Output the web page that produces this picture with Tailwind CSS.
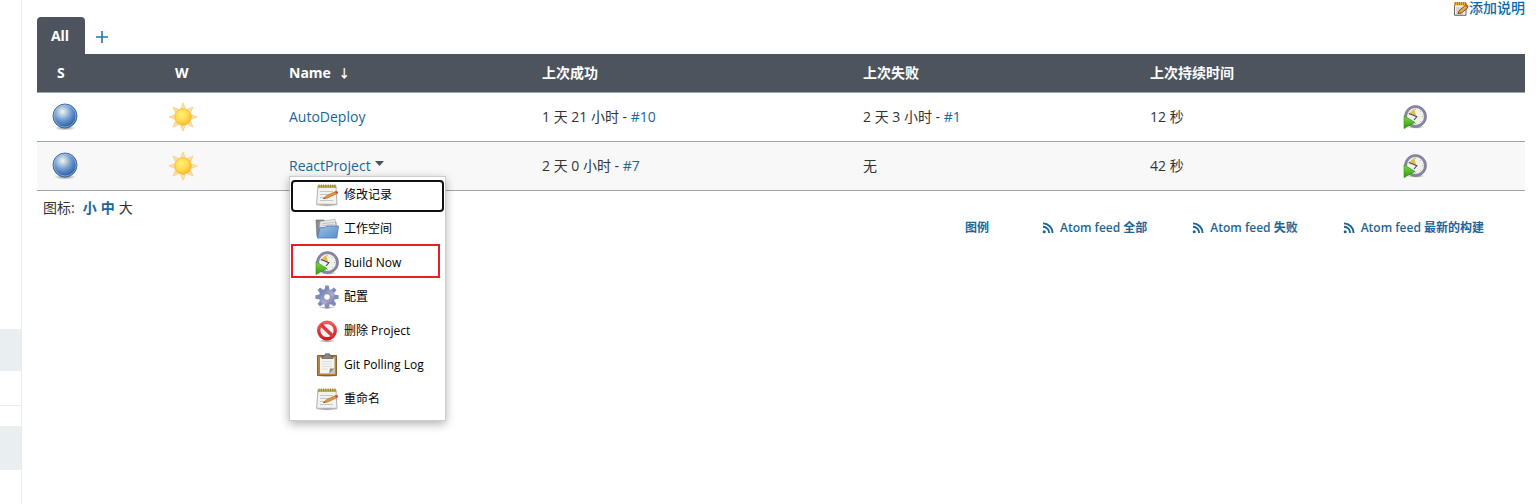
<!DOCTYPE html>
<html lang="zh-CN">
<head>
<meta charset="utf-8">
<title>Jenkins</title>
<script src="https://cdn.jsdelivr.net/npm/@tailwindcss/browser@4"></script>
</head>
<body class="flex min-h-screen bg-white font-['Open_Sans','Noto_Sans_CJK_SC',sans-serif] text-sm leading-5 text-[#333]">
<svg class="absolute size-0" aria-hidden="true">
  <defs>
    <radialGradient id="gBall" cx=".4" cy=".32" r=".65"><stop offset="0" stop-color="#f4f6e4"/><stop offset=".2" stop-color="#c3d6e3"/><stop offset=".55" stop-color="#6f9bd0"/><stop offset="1" stop-color="#2c5fa6"/></radialGradient>
    <radialGradient id="gSun" cx=".4" cy=".35" r=".7"><stop offset="0" stop-color="#fff07a"/><stop offset=".55" stop-color="#ffdc4a"/><stop offset="1" stop-color="#f9b233"/></radialGradient>
    <radialGradient id="gShade"><stop offset="0" stop-color="#000" stop-opacity=".45"/><stop offset="1" stop-color="#000" stop-opacity="0"/></radialGradient>
    <linearGradient id="gGreen" x1="0" y1="0" x2="0" y2="1"><stop offset="0" stop-color="#86d84a"/><stop offset="1" stop-color="#2f9a10"/></linearGradient>
    <linearGradient id="gGear" x1="0" y1="0" x2="1" y2="1"><stop offset="0" stop-color="#7086b8"/><stop offset=".6" stop-color="#a9acd0"/><stop offset="1" stop-color="#7d80a8"/></linearGradient>
    <linearGradient id="gFolder" x1="0" y1="0" x2="1" y2="1"><stop offset="0" stop-color="#9dc0e6"/><stop offset="1" stop-color="#5b8cc6"/></linearGradient>
    <linearGradient id="gRed" x1="0" y1="0" x2="0" y2="1"><stop offset="0" stop-color="#ee5a5a"/><stop offset="1" stop-color="#cc1e24"/></linearGradient>
    <symbol id="ball" viewBox="0 0 28 28"><ellipse cx="14" cy="25" rx="11" ry="2.6" fill="url(#gShade)"/><circle cx="14" cy="13" r="12" fill="url(#gBall)" stroke="#3f699f" stroke-width="1"/><circle cx="14" cy="13" r="11" fill="none" stroke="#a9c4e4" stroke-opacity=".7" stroke-width=".9"/></symbol>
    <symbol id="sun" viewBox="0 0 30 30">
      <g fill="#fce0a0" stroke="#f9cf83" stroke-width=".8">
        <path id="ray" d="M15 .9 17.300 6.600H12.700Z"/><use href="#ray" transform="rotate(45 15 15)"/><use href="#ray" transform="rotate(90 15 15)"/><use href="#ray" transform="rotate(135 15 15)"/><use href="#ray" transform="rotate(180 15 15)"/><use href="#ray" transform="rotate(225 15 15)"/><use href="#ray" transform="rotate(270 15 15)"/><use href="#ray" transform="rotate(315 15 15)"/>
      </g>
      <circle cx="15" cy="15" r="8.2" fill="url(#gSun)" stroke="#f6b53f" stroke-width=".8"/></symbol>
    <symbol id="clock" viewBox="0 0 24 24"><ellipse cx="13" cy="22" rx="9" ry="1.8" fill="url(#gShade)"/><circle cx="12.5" cy="11.5" r="9.8" fill="#f1f1ec" stroke="#8787a3" stroke-width="2.6"/><circle cx="12.5" cy="11.5" r="11" fill="none" stroke="#6c6c84" stroke-width=".5"/><path d="M6.500 8 11.200 3.800 13 10.500Z" fill="#e2bd4d"/><path d="M5.800 8.500 10.500 10.200 13.800 11.800 11 15" fill="none" stroke="#444" stroke-width="1.1"/><path d="M12.500 3.800v1M20 11.500h-1M12.500 19v-1M18 6l-.7.7M18 17l-.7-.7" stroke="#999" stroke-width=".8"/><path d="M1 10.800 12 17.400 1 23.600Z" fill="url(#gGreen)" stroke="#2f8d16" stroke-width=".6"/></symbol>
    <symbol id="note" viewBox="0 0 24 24"><ellipse cx="12" cy="22" rx="12" ry="1.7" fill="url(#gShade)"/><path d="M3 3h18l1 18.300H1.600Z" fill="#f2f2ef" stroke="#a9a9a3" stroke-width=".9"/><path d="M2.800 2.300h18.400v2.700H2.800Z" fill="#c9b94b"/><path d="M4 1.500v3M6.300 1.500v3M8.600 1.500v3M10.900 1.500v3M13.200 1.500v3M15.500 1.500v3M17.800 1.500v3M20 1.500v3" stroke="#8b7f2b" stroke-width="1"/><path d="M5 8.500h13M5 11.500h9M5 14.500h5M5 17.500h13" stroke="#c6c6c6" stroke-width="1"/><path d="M9 15.200 11.200 12.900 20.500 8.600 21.700 10.700 12 15.300Z" fill="#ea9a35" stroke="#9c5c1c" stroke-width=".6"/><path d="m20 8.800 1.500-.8q2 .3 1.600 2.100l-1.300.8Z" fill="#d4433d"/><path d="m8 15.900 1.300-1.400 1 1.100Z" fill="#333"/></symbol>
    <symbol id="folder" viewBox="0 0 24 24"><path d="M1 3h8l1.500 2H21v15H2Z" fill="#8a8d90" stroke="#6d7073" stroke-width=".7"/><path d="M5 4.500 20 2.300l1.500 10H4.500Z" fill="#e5e7e8" stroke="#a5a7a8" stroke-width=".6"/><path d="M7 6.800 19 5.300M7 8.800 19 7.300" stroke="#bbb" stroke-width=".8"/><path d="M5 10.800 10 10.500 11.500 9H23.500L21.800 21H2.500Z" fill="url(#gFolder)" stroke="#4b7ab5" stroke-width=".8"/></symbol>
    <symbol id="gear" viewBox="0 0 24 24"><ellipse cx="12" cy="22.500" rx="9" ry="1.400" fill="url(#gShade)"/><g fill="#7c8cb8"><path id="tooth" d="M10.300.4h3.400l1 6h-5.400Z"/><use href="#tooth" transform="rotate(45 12 12)"/><use href="#tooth" transform="rotate(90 12 12)"/><use href="#tooth" transform="rotate(135 12 12)"/><use href="#tooth" transform="rotate(180 12 12)"/><use href="#tooth" transform="rotate(225 12 12)"/><use href="#tooth" transform="rotate(270 12 12)"/><use href="#tooth" transform="rotate(315 12 12)"/></g><circle cx="12" cy="12" r="5.600" fill="none" stroke="url(#gGear)" stroke-width="4.800"/><circle cx="12" cy="12" r="3.400" fill="#fff" stroke="#686d99" stroke-width=".8"/></symbol>
    <symbol id="stop" viewBox="0 0 24 24"><ellipse cx="12" cy="22" rx="9" ry="1.700" fill="url(#gShade)"/><circle cx="12" cy="11.500" r="8.300" fill="#f7f3f3" stroke="url(#gRed)" stroke-width="3.400"/><path d="m6 5.800 12 11.500" stroke="#dc383b" stroke-width="3.400"/></symbol>
    <symbol id="clip" viewBox="0 0 24 24"><ellipse cx="12" cy="23" rx="11" ry="1" fill="url(#gShade)"/><path d="M2.500 2.500h19v20h-19Z" fill="#b8813d" stroke="#85571f" stroke-width=".9"/><path d="M5 4.500h14.500v16H5Z" fill="#f4f4f2"/><path d="M7 8.500h10M7 11h10M7 13.500h10M7 16h6" stroke="#dedede"/><path d="m19.500 15.500-5.500 5 5.500 0Z" fill="#c3c3c3"/><path d="m14 20.500 1-5 4.500 0Z" fill="#888"/><path d="M7 5.500V3h2.500L10.500.8h4L15.500 3H18v2.500Z" fill="#858883" stroke="#555753" stroke-width=".7"/></symbol>
    <symbol id="rss" viewBox="0 0 12 12"><circle cx="2.200" cy="9.800" r="1.500" fill="currentColor"/><path d="M1 4.800a6.200 6.200 0 0 1 6.200 6.200M1 1.400a9.600 9.600 0 0 1 9.600 9.600" fill="none" stroke="currentColor" stroke-width="1.900"/></symbol>
    <symbol id="edit" viewBox="0 0 16 16"><path d="M1.500 3H13v12.300H1.500Z" fill="#f4f3eb" stroke="#66665f" stroke-width="1"/><path d="M1 2.500H13.500v3H1Z" fill="#e5ad35"/><path d="M2.500 2v3M4.500 2v3M6.500 2v3M8.500 2v3M10.500 2v3M12.500 2v3" stroke="#9f741a" stroke-width=".8"/><path d="M3 8h6M3 10h4M3 12h3M3 14h7" stroke="#aaa" stroke-width=".8"/><path d="M5 13.500 6.300 10.500 12.500 5.200 15 7.500 8.500 13Z" fill="#f1a73c" stroke="#684018" stroke-width=".9"/><path d="m12.500 5.200 1.200-.8L15.700 6.500l-.8 1Z" fill="#d23f35"/></symbol>
  </defs>
</svg>

<aside class="flex w-[22px] shrink-0 flex-col border-r border-[#eaebec] pt-[329px]">
  <div class="h-[42px] bg-[#e9eef1]"></div>
  <div class="mt-[34px] h-px bg-[#eaebec]"></div>
  <div class="mt-5 h-11 bg-[#e9eef1]"></div>
</aside>

<main class="min-w-0 flex-1 pr-[15px] pl-[15px]">
  <div class="flex h-[17px] items-start justify-end">
    <a href="#" class="flex items-center leading-4 font-medium text-[#0b6aa2]"><svg class="size-4"><use href="#edit"/></svg>添加说明</a>
  </div>
  <nav class="flex h-[37px] items-stretch">
    <a href="#" class="flex w-12 items-center justify-center rounded-t bg-[#4d545d] pr-0.5 font-bold text-white">All</a>
    <a href="#" aria-label="New view" class="flex items-center px-[11px] pt-0.5 text-[#1f78ac]"><svg class="size-3" viewBox="0 0 12 12" fill="none" stroke="currentColor" stroke-width="1.600"><path d="M6 0v12M0 6h12"/></svg></a>
  </nav>

  <table class="w-full table-fixed border-collapse text-left">
    <colgroup><col class="w-[115px]"><col class="w-[121px]"><col class="w-[253px]"><col class="w-[321px]"><col class="w-[287px]"><col class="w-[253px]"><col class="w-[138px]"></colgroup>
    <thead>
      <tr class="h-[38px] border-b border-[#98a6ad] bg-[#4d545d] text-white">
        <th class="pl-5">S</th><th class="pl-[23px]">W</th><th class="pl-4">Name &nbsp;<span class="text-xs">↓</span></th><th class="pl-4">上次成功</th><th class="pl-4">上次失败</th><th class="pl-4">上次持续时间</th><th></th>
      </tr>
    </thead>
    <tbody>
      <tr class="h-[49px] border-b border-[#98a6ad]">
        <td class="pl-3.5"><svg class="size-7" role="img" aria-label="Success"><use href="#ball"/></svg></td>
        <td class="pl-4"><svg class="size-[30px]" role="img" aria-label="Sunny"><use href="#sun"/></svg></td>
        <td class="pl-4"><a href="#" class="font-medium text-[#1b6698]">AutoDeploy</a></td>
        <td class="pl-4">1 天 21 小时 - <a href="#" class="font-medium text-[#1b6698]">#10</a></td>
        <td class="pl-4">2 天 3 小时 - <a href="#" class="font-medium text-[#1b6698]">#1</a></td>
        <td class="pl-4">12 秒</td>
        <td class="pl-4"><button type="button" aria-label="Build" class="block"><svg class="size-6"><use href="#clock"/></svg></button></td>
      </tr>
      <tr class="h-[49px] border-b border-[#98a6ad] bg-[#f8f8f8]">
        <td class="pl-3.5"><svg class="size-7" role="img" aria-label="Success"><use href="#ball"/></svg></td>
        <td class="pl-4"><svg class="size-[30px]" role="img" aria-label="Sunny"><use href="#sun"/></svg></td>
        <td class="pl-4">
          <div class="relative">
            <a href="#" class="flex items-center gap-1 font-medium text-[#1b6698]">ReactProject<svg class="mb-1 h-[5px] w-[9px]" viewBox="0 0 9 5"><path d="M0 0h9L4.500 5Z" fill="#4d545d"/></svg></a>
            <div class="absolute top-5 left-0 z-10 w-[157px] border border-[#ccc] bg-white pt-px pb-1 text-xs text-black shadow-[0_3px_9px_rgba(0,0,0,0.3)]">
              <button type="button" class="relative flex h-[34px] w-full items-center gap-[5px] pl-[25px]"><span class="absolute inset-x-px top-0.5 bottom-0 rounded border-2 border-[#101010]"></span><svg class="size-6"><use href="#note"/></svg>修改记录</button>
              <button type="button" class="flex h-[34px] w-full items-center gap-[5px] pl-[25px]"><svg class="size-6"><use href="#folder"/></svg>工作空间</button>
              <button type="button" class="relative flex h-[34px] w-full items-center gap-[5px] pl-[25px]"><span class="absolute -top-0.5 right-[5px] bottom-0.5 left-px border-2 border-[#ec1c24]"></span><svg class="size-6"><use href="#clock"/></svg>Build Now</button>
              <button type="button" class="flex h-[34px] w-full items-center gap-[5px] pl-[25px]"><svg class="size-6"><use href="#gear"/></svg>配置</button>
              <button type="button" class="flex h-[34px] w-full items-center gap-[5px] pl-[25px]"><svg class="size-6"><use href="#stop"/></svg>删除 Project</button>
              <button type="button" class="flex h-[34px] w-full items-center gap-[5px] pl-[25px]"><svg class="size-6"><use href="#clip"/></svg>Git Polling Log</button>
              <button type="button" class="flex h-[34px] w-full items-center gap-[5px] pl-[25px]"><svg class="size-6"><use href="#note"/></svg>重命名</button>
            </div>
          </div>
        </td>
        <td class="pl-4">2 天 0 小时 - <a href="#" class="font-medium text-[#1b6698]">#7</a></td>
        <td class="pl-4">无</td>
        <td class="pl-4">42 秒</td>
        <td class="pl-4"><button type="button" aria-label="Build" class="block"><svg class="size-6"><use href="#clock"/></svg></button></td>
      </tr>
    </tbody>
  </table>

  <div class="flex justify-between pt-[7px]">
    <div class="flex gap-1 pl-1.5"><span class="pr-1">图标:</span><a href="#" class="font-bold text-[#1b6698]">小</a><a href="#" class="font-bold text-[#1b6698]">中</a><span>大</span></div>
    <div class="flex gap-[45px] pt-5 pr-[41px] text-xs leading-5 font-semibold text-[#1b6698]">
      <a href="#" class="pr-2">图例</a>
      <a href="#" class="flex items-center gap-1.5"><svg class="size-3"><use href="#rss"/></svg>Atom feed 全部</a>
      <a href="#" class="flex items-center gap-1.5"><svg class="size-3"><use href="#rss"/></svg>Atom feed 失败</a>
      <a href="#" class="flex items-center gap-1.5"><svg class="size-3"><use href="#rss"/></svg>Atom feed 最新的构建</a>
    </div>
  </div>
</main>
</body>
</html>
